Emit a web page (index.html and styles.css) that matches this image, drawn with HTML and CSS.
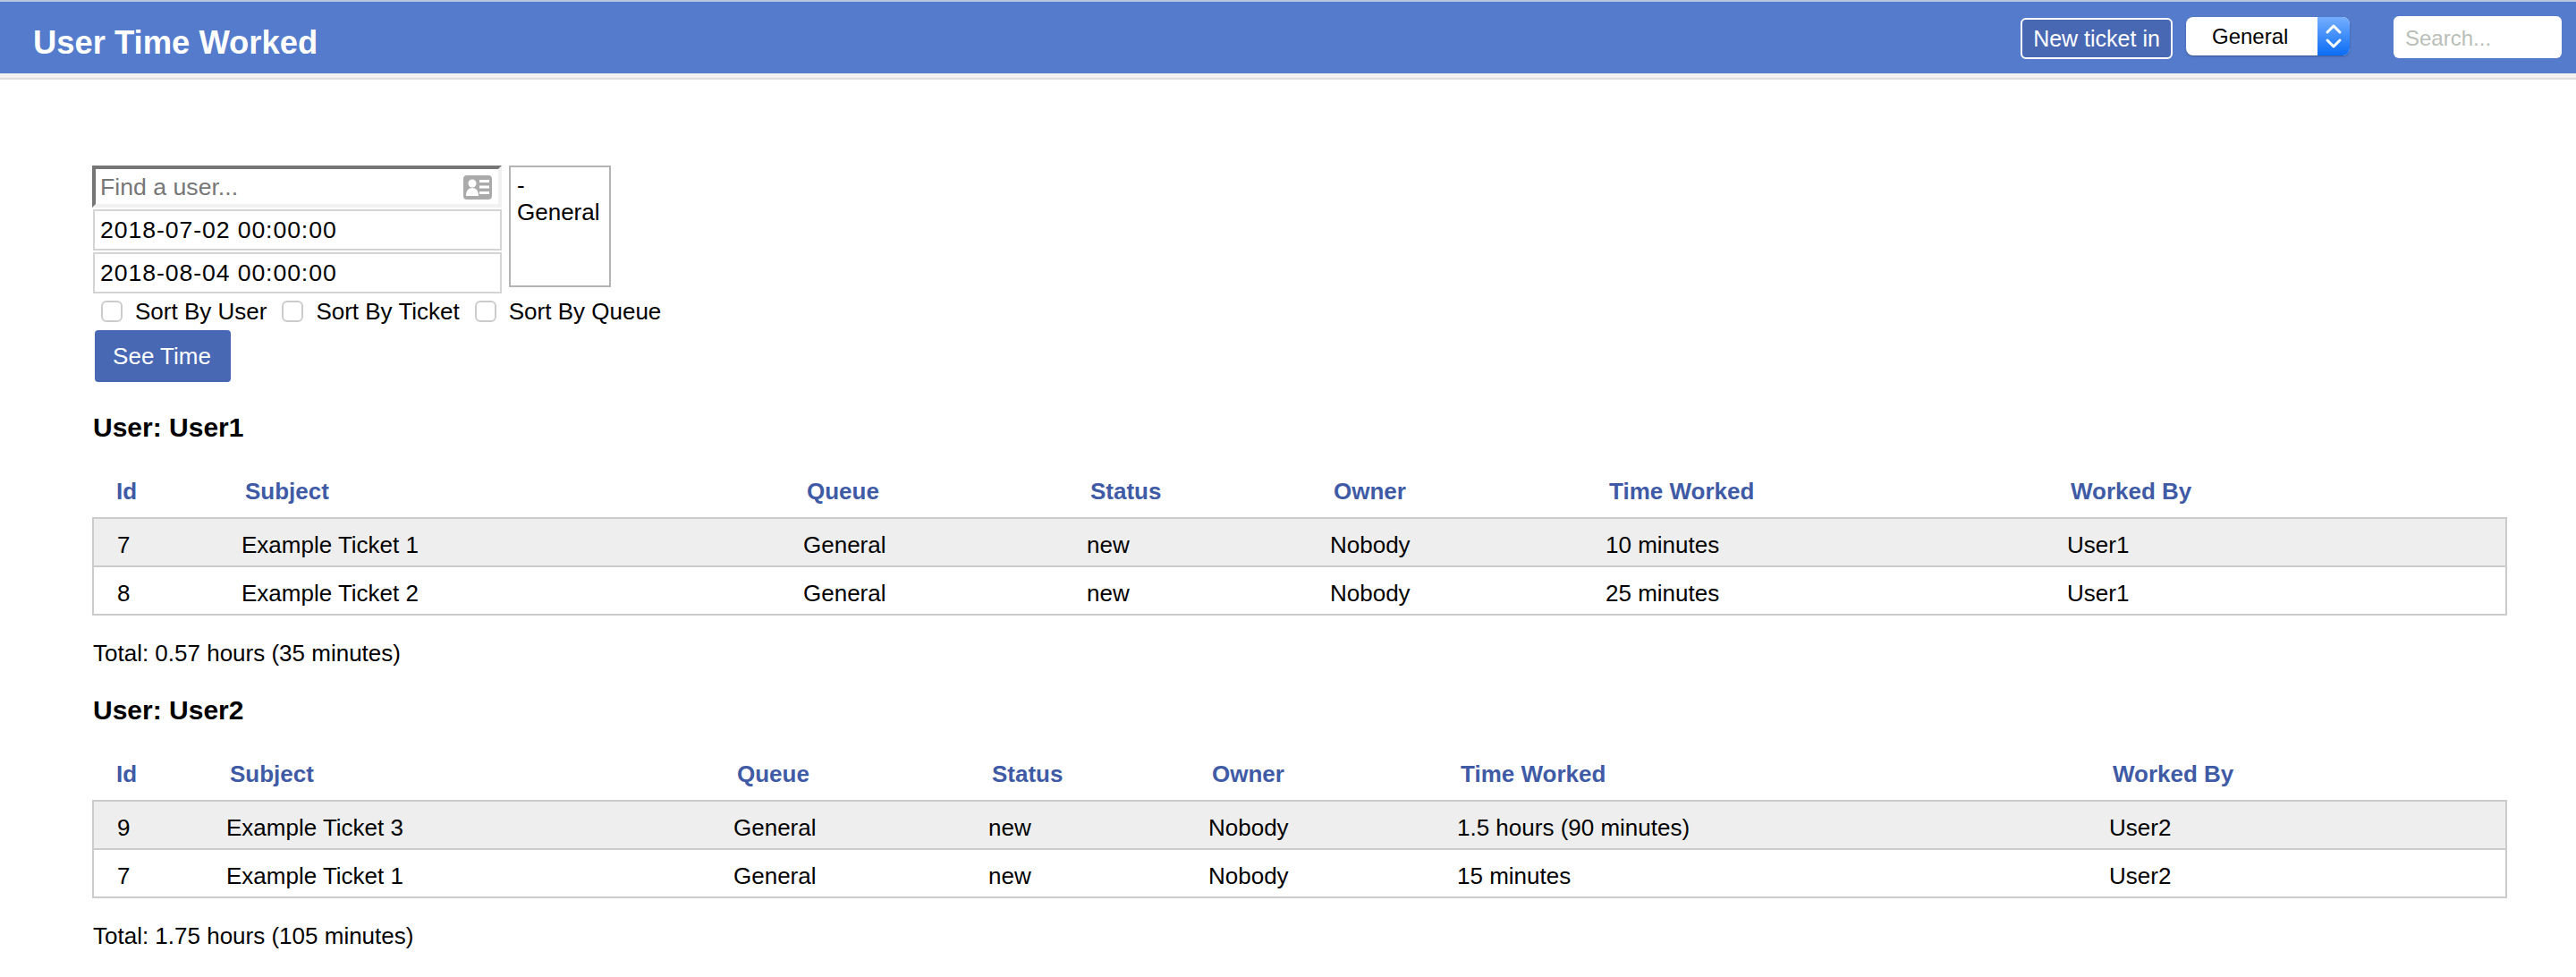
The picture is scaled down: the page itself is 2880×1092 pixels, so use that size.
FILE: index.html
```html
<!DOCTYPE html>
<html lang="en">
<head>
    <meta charset="UTF-8">
    <title>User Time Worked</title>
    <link rel="stylesheet" href="styles.css">
</head>
<body>

    <header class="topbar">
        <h1>User Time Worked</h1>
        <div class="topbar-tools">
            <a class="new-ticket" href="#">New ticket in</a>
            <div class="queue-select">
                <span class="queue-name">General</span>
                <span class="queue-arrows">
                    <svg width="36" height="43" viewBox="0 0 36 43" fill="none" stroke="#fff" stroke-width="3" stroke-linecap="round" stroke-linejoin="round">
                        <path d="M11 17l7-7 7 7M11 26l7 7 7-7"/>
                    </svg>
                </span>
            </div>
            <div class="search-box">Search...</div>
        </div>
    </header>

    <main class="content">
        <form class="filters">
            <div class="filter-top">
                <div class="filter-inputs">
                    <div class="user-input">
                        <span>Find a user...</span>
                        <svg width="32" height="27" viewBox="0 0 32 27">
                            <rect width="32" height="27" rx="4" fill="#aaa"/>
                            <circle cx="10" cy="9" r="4.500" fill="#fff"/>
                            <path d="M3 23c0-6 3-9 7-9s7 3 7 9z" fill="#fff"/>
                            <path d="M18 5h11v3H18zM18 11.500h11v3H18zM18 18h11v3H18z" fill="#fff"/>
                        </svg>
                    </div>
                    <div class="date-input">2018-07-02 00:00:00</div>
                    <div class="date-input">2018-08-04 00:00:00</div>
                </div>
                <div class="queue-list">
                    <div>-</div>
                    <div>General</div>
                </div>
            </div>
            <div class="sort-row">
                <label class="sort-opt"><span class="check"></span>Sort By User</label>
                <label class="sort-opt"><span class="check"></span>Sort By Ticket</label>
                <label class="sort-opt"><span class="check"></span>Sort By Queue</label>
            </div>
            <button type="button" class="see-time">See Time</button>
        </form>

        <section class="user-block">
            <h2>User: User1</h2>
            <table class="time-table first">
                <colgroup>
                    <col class="c1"><col class="c2"><col class="c3"><col class="c4"><col class="c5"><col class="c6"><col>
                </colgroup>
                <thead>
                    <tr><th>Id</th><th>Subject</th><th>Queue</th><th>Status</th><th>Owner</th><th>Time Worked</th><th>Worked By</th></tr>
                </thead>
                <tbody>
                    <tr class="odd"><td>7</td><td>Example Ticket 1</td><td>General</td><td>new</td><td>Nobody</td><td>10 minutes</td><td>User1</td></tr>
                    <tr><td>8</td><td>Example Ticket 2</td><td>General</td><td>new</td><td>Nobody</td><td>25 minutes</td><td>User1</td></tr>
                </tbody>
            </table>
            <p class="total">Total: 0.57 hours (35 minutes)</p>
        </section>

        <section class="user-block">
            <h2>User: User2</h2>
            <table class="time-table second">
                <colgroup>
                    <col class="c1"><col class="c2"><col class="c3"><col class="c4"><col class="c5"><col class="c6"><col>
                </colgroup>
                <thead>
                    <tr><th>Id</th><th>Subject</th><th>Queue</th><th>Status</th><th>Owner</th><th>Time Worked</th><th>Worked By</th></tr>
                </thead>
                <tbody>
                    <tr class="odd"><td>9</td><td>Example Ticket 3</td><td>General</td><td>new</td><td>Nobody</td><td>1.5 hours (90 minutes)</td><td>User2</td></tr>
                    <tr><td>7</td><td>Example Ticket 1</td><td>General</td><td>new</td><td>Nobody</td><td>15 minutes</td><td>User2</td></tr>
                </tbody>
            </table>
            <p class="total">Total: 1.75 hours (105 minutes)</p>
        </section>
    </main>

</body>
</html>
```

FILE: styles.css
```css
* {
    margin: 0;
    padding: 0;
    box-sizing: border-box;
}

body {
    font-family: "Liberation Sans", Arial, sans-serif;
    font-size: 26px;
    color: #000;
    background-color: #fff;
}

/* top bar */
.topbar {
    display: flex;
    justify-content: space-between;
    height: 87px;
    border-top: 2px solid #b9c6e0;
    border-bottom: 5px solid #f2f2f2;
    box-shadow: 0 2px 0 #ddd;
    background-color: #547bcc;
}

.topbar h1 {
    font-size: 36.400px;
    line-height: 47px;
    padding: 22px 0 0 37px;
    color: #fff;
}

.topbar-tools {
    display: flex;
    align-items: flex-start;
    margin-right: 16px;
    padding-top: 16px;
}

.new-ticket {
    width: 170px;
    height: 46px;
    margin: 2px 15px 0 0;
    border: 2px solid #fff;
    border-radius: 6px;
    background-color: #4868b4;
    color: #fff;
    font-size: 25px;
    line-height: 42px;
    text-align: center;
    text-decoration: none;
}

.queue-select {
    display: flex;
    width: 183px;
    height: 43px;
    margin: 1px 49px 0 0;
    border-radius: 8px;
    background-color: #fff;
    box-shadow: 0 1px 2px rgba(0, 0, 0, 0.3);
    overflow: hidden;
}

.queue-name {
    width: 147px;
    padding-left: 29px;
    font-size: 24px;
    line-height: 44px;
}

.queue-arrows {
    width: 36px;
    background: linear-gradient(#75aeff, #0a6cf5);
}

.search-box {
    width: 188px;
    height: 47px;
    padding-left: 13px;
    border-radius: 6px;
    background-color: #fff;
    color: #b9beb8;
    font-size: 24px;
    line-height: 49px;
}

/* form */
.content {
    padding: 98px 77px 0 103px;
}

.filters {
    margin-bottom: 34px;
}

.filter-top {
    display: flex;
    align-items: flex-start;
    gap: 8px;
}

.filter-inputs {
    display: flex;
    flex-direction: column;
    gap: 2px;
    width: 458px;
}

.user-input {
    display: flex;
    align-items: center;
    justify-content: space-between;
    height: 47px;
    padding: 2px 7px 0 5px;
    border-style: solid;
    border-width: 4px;
    border-color: #767676 #f1f1f1 #f1f1f1 #767676;
    color: #777;
    font-size: 26.670px;
}

.date-input {
    height: 46px;
    margin-left: 1px;
    padding-left: 6px;
    border: 2px solid #d4d4d4;
    font-size: 26.670px;
    letter-spacing: 0.900px;
    line-height: 42px;
}

.queue-list {
    width: 114px;
    height: 136px;
    padding: 5px 0 0 7px;
    border: 2px solid #b4b4b4;
    line-height: 30px;
}

.sort-row {
    display: flex;
    margin-top: 7px;
    padding-left: 10px;
}

.sort-opt {
    display: flex;
    align-items: center;
    height: 26px;
    margin-right: 17px;
    line-height: 26px;
}

.check {
    width: 24px;
    height: 24px;
    margin-right: 14px;
    border: 2px solid #ccc;
    border-radius: 6px;
    background-color: #fff;
}

.see-time {
    display: block;
    width: 152px;
    height: 58px;
    margin: 8px 0 0 3px;
    padding-right: 2px;
    border: none;
    border-radius: 4px;
    background-color: #4868b4;
    color: #fff;
    font-family: inherit;
    font-size: 26px;
}

/* tables */
.user-block + .user-block {
    margin-top: 31px;
}

.user-block h2 {
    font-size: 30px;
    line-height: 34px;
    margin-left: 1px;
}

.time-table {
    width: 2700px;
    margin-top: 31px;
    border-collapse: collapse;
    table-layout: fixed;
}

.first .c1 { width: 166px; }
.first .c2 { width: 628px; }
.first .c3 { width: 317px; }
.first .c4 { width: 272px; }
.first .c5 { width: 308px; }
.first .c6 { width: 516px; }

.second .c1 { width: 149px; }
.second .c2 { width: 567px; }
.second .c3 { width: 285px; }
.second .c4 { width: 246px; }
.second .c5 { width: 278px; }
.second .c6 { width: 729px; }

.time-table th {
    height: 53px;
    padding: 8px 0 0 4px;
    color: #3f5ba6;
    font-size: 26px;
    text-align: left;
    vertical-align: top;
}

.time-table th:first-child {
    padding-left: 26px;
}

.time-table td {
    height: 54px;
    padding: 7px 0 0;
}

.time-table td:first-child {
    padding-left: 26px;
}

.time-table tbody tr {
    border: 2px solid #ccc;
}

.time-table tr.odd td {
    background-color: #eee;
}

.total {
    margin: 26px 0 0 1px;
    line-height: 32px;
}
```
